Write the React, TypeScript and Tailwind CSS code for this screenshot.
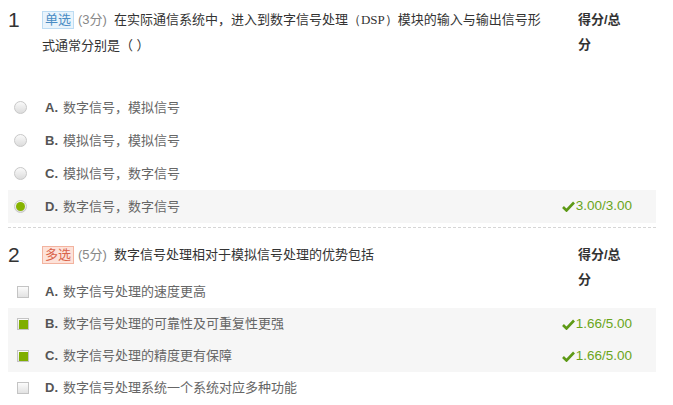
const font = {
  fontFamily: '"Liberation Sans", "Noto Sans CJK SC", sans-serif',
};

const Radio = ({ checked }: { checked?: boolean }) => (
  <span className="flex h-[13px] w-[13px] items-center justify-center rounded-full border border-[#c8c8c8] bg-gradient-to-b from-[#fafafa] to-[#dcdcdc]">
    {checked && <span className="h-[9px] w-[9px] rounded-full bg-[#86b300]" />}
  </span>
);

const Box = ({ checked }: { checked?: boolean }) => (
  <span className="flex h-[12px] w-[12px] items-center justify-center border border-[#c4c4c4] bg-gradient-to-b from-[#fcfcfc] to-[#e2e2e2]">
    {checked && <span className="h-[9px] w-[9px] bg-[#7fae00]" />}
  </span>
);

const Check = () => (
  <svg width="13" height="11" viewBox="0 0 13 11" className="mr-[1px]">
    <path d="M1 6 L4.5 9.5 L12 1.5" fill="none" stroke="#5e9a16" strokeWidth="2.6" />
  </svg>
);

type Opt = { key: string; text: string; checked?: boolean; shaded?: boolean; score?: string };

const Option = ({ o, multi, h }: { o: Opt; multi?: boolean; h: string }) => (
  <div className={`flex items-center ${h} ${o.shaded ? 'bg-[#f6f6f6]' : ''}`}>
    <div className={`flex w-[37px] shrink-0 ${multi ? 'pl-[9px]' : 'pl-[6px]'}`}>
      {multi ? <Box checked={o.checked} /> : <Radio checked={o.checked} />}
    </div>
    <span className="w-[18px] text-[13px] font-bold text-[#555]">{o.key}</span>
    <span className="flex-1 text-[13px] text-[#666]">{o.text}</span>
    {o.score && (
      <span className="mr-[24px] flex items-center text-[13.5px] text-[#6aa51a]">
        <Check />
        {o.score}
      </span>
    )}
  </div>
);

const ScoreHead = () => (
  <div className="w-[44px] shrink-0 text-[13px] font-bold leading-[25px] text-[#333]">
    得分/总分
  </div>
);

const q1: Opt[] = [
  { key: 'A.', text: '数字信号，模拟信号' },
  { key: 'B.', text: '模拟信号，模拟信号' },
  { key: 'C.', text: '模拟信号，数字信号' },
  { key: 'D.', text: '数字信号，数字信号', checked: true, shaded: true, score: '3.00/3.00' },
];

const q2: Opt[] = [
  { key: 'A.', text: '数字信号处理的速度更高' },
  { key: 'B.', text: '数字信号处理的可靠性及可重复性更强', checked: true, shaded: true, score: '1.66/5.00' },
  { key: 'C.', text: '数字信号处理的精度更有保障', checked: true, shaded: true, score: '1.66/5.00' },
  { key: 'D.', text: '数字信号处理系统一个系统对应多种功能' },
];

export default function App() {
  return (
    <div className="h-[405px] w-[673px] overflow-hidden bg-white" style={font}>
      <div className="ml-[8px] w-[648px]">
        {/* Question 1 */}
        <div className="flex h-[91px] items-start pt-[7px]">
          <div className="w-[34px] shrink-0 text-[21px] leading-[26px] text-[#333]">1</div>
          <div className="w-[500px] text-[13px] leading-[26px] text-[#333]">
            <span className="mr-[4px] inline-block border border-[#bcdcf3] bg-[#e9f4fc] px-[2px] leading-[16px] text-[#4a8cc4]">单选</span>
            <span className="mr-[7px] text-[#888]">(3分)</span>
            <span>在实际通信系统中，进入到数字信号处理</span>
            <span style={{ fontFamily: '"Liberation Serif", serif' }}>（DSP）</span>
            <span>模块的输入与输出信号形</span>
            <span>式通常分别是（ ）</span>
          </div>
          <div className="pl-[36px]">
            <ScoreHead />
          </div>
        </div>
        {q1.map((o) => (
          <Option key={o.key} o={o} h="h-[33px]" />
        ))}
        <div className="mt-[4px] border-t border-dashed border-[#d6d6d6]" />

        {/* Question 2 */}
        <div className="flex h-[48px] items-start pt-[14px]">
          <div className="w-[34px] shrink-0 text-[21px] leading-[26px] text-[#333]">2</div>
          <div className="w-[500px] text-[13px] leading-[26px] text-[#333]">
            <span className="mr-[4px] inline-block border border-[#f3b39f] bg-[#fde2d9] px-[2px] leading-[16px] text-[#d9634a]">多选</span>
            <span className="mr-[7px] text-[#888]">(5分)</span>
            <span>数字信号处理相对于模拟信号处理的优势包括</span>
          </div>
          <div className="pl-[36px]">
            <ScoreHead />
          </div>
        </div>
        {q2.map((o) => (
          <Option key={o.key} o={o} multi h="h-[32px]" />
        ))}
      </div>
    </div>
  );
}
